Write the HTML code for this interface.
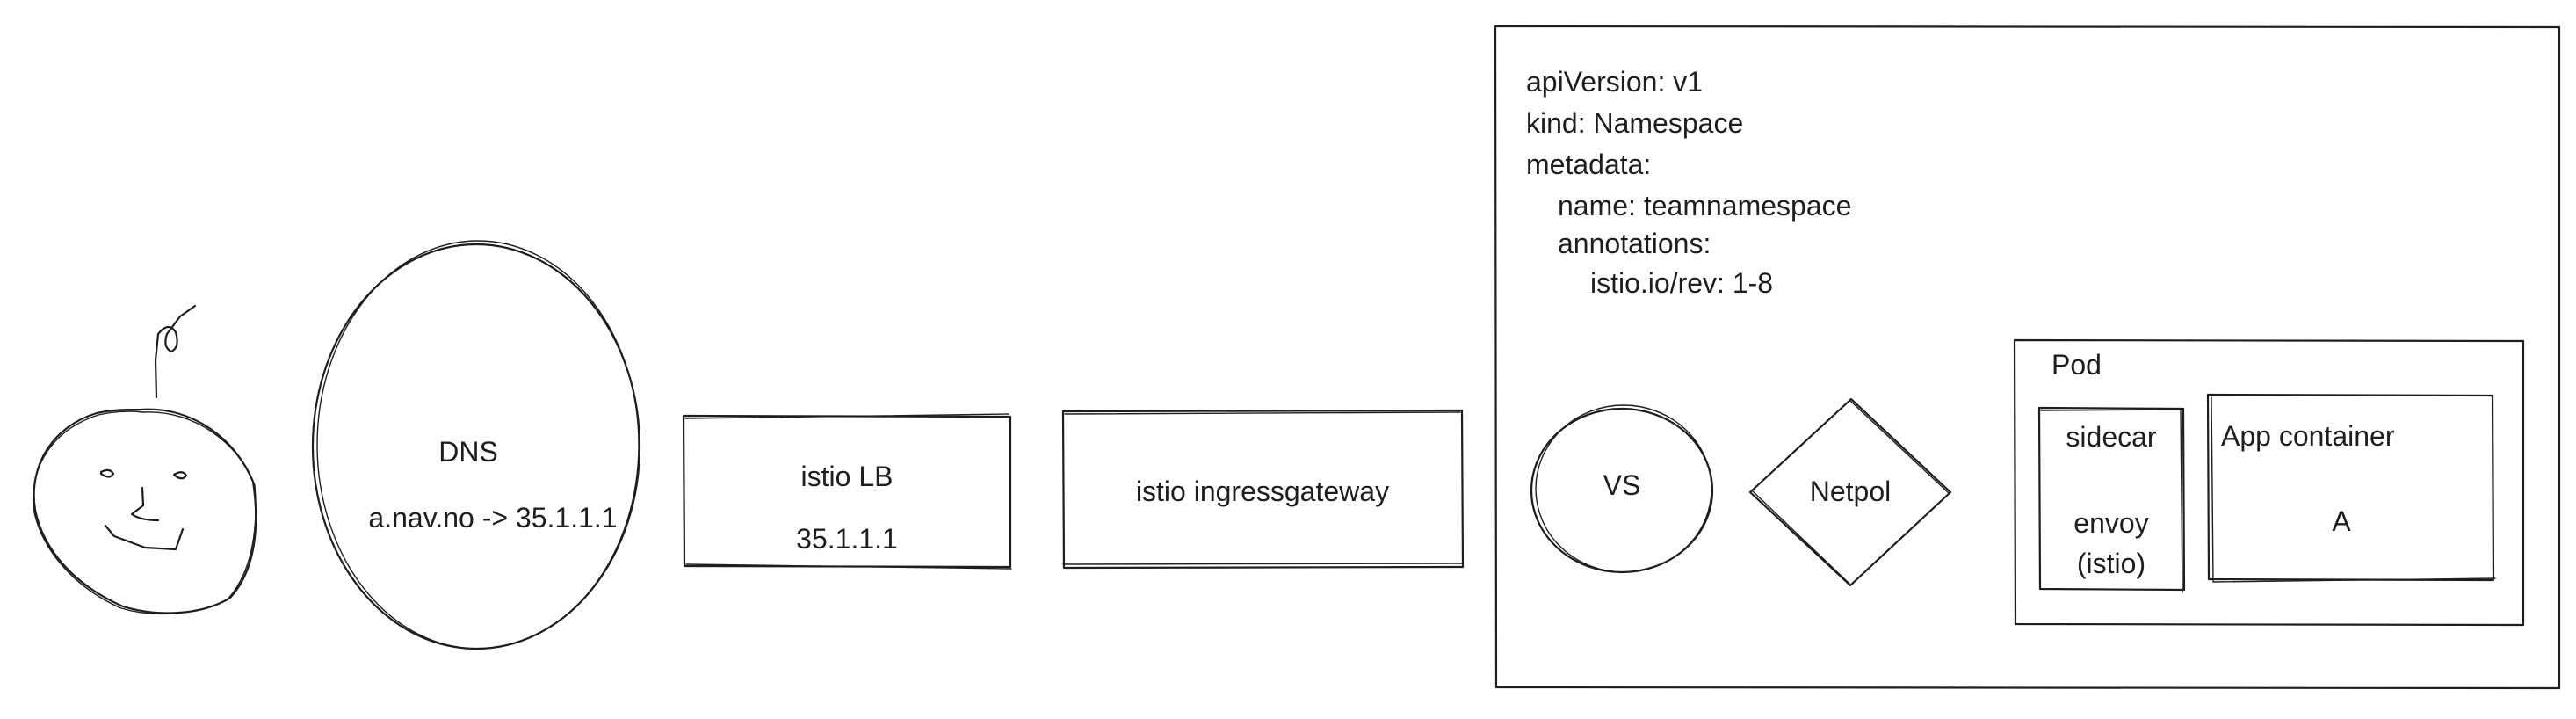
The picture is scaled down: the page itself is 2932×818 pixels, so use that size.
<!DOCTYPE html>
<html><head><meta charset="utf-8"><style>
html,body{margin:0;padding:0;background:#fff;}
svg{display:block;}
text{font-family:"Liberation Sans",sans-serif;fill:#1e1e1e;}
</style></head><body>
<svg width="2932" height="818" viewBox="0 0 2932 818" xmlns="http://www.w3.org/2000/svg">
<g fill="none" stroke="#1e1e1e" stroke-width="2.2" stroke-linecap="round" stroke-linejoin="round">
<!-- face -->
<path d="M160 466 C220 462 268 500 288 548 C296 600 290 650 262 680 C230 700 180 702 140 690 C90 668 50 630 40 580 C32 530 60 485 110 470 C128 466 145 466 160 466 Z"/>
<path d="M163 469 C222 466 272 505 290 552 C294 602 287 652 258 683 C226 698 178 704 138 692 C88 670 47 628 38 578 C34 528 62 488 112 472 C130 468 147 467 163 469 Z" stroke-width="1.4"/>
<path d="M178 452 L177 410 L180 380 Q192 365 200 378 Q205 395 195 400 Q185 395 190 380 L205 360 L222 348"/>
<path d="M115 537 q10 -5 14 2 q-4 7 -14 0z"/>
<path d="M198 540 q10 -6 14 1 q-5 7 -14 -1z"/>
<path d="M162 555 L163 575 L150 585 Q160 592 180 592"/>
<path d="M120 598 L130 610 L165 623 L200 625 L208 602"/>
<!-- DNS ellipse -->
<ellipse cx="542" cy="508" rx="186" ry="230"/>
<ellipse cx="544" cy="506" rx="183" ry="232" stroke-width="1.4"/>
<!-- istio LB -->
<path d="M778 473 L1150 474 L1150 645 L779 644 Z"/>
<path d="M780 476 L1148 471 M781 642 L1151 647" stroke-width="1.4"/>
<!-- ingressgateway -->
<path d="M1210 468 L1664 467 L1665 645 L1211 646 Z"/>
<path d="M1212 471 L1662 469 M1210 642 L1665 641" stroke-width="1.4"/>
<!-- namespace box -->
<path d="M1702 30 L2913 31 L2913 783 L1703 782 Z"/>
<!-- VS -->
<ellipse cx="1846" cy="558" rx="103" ry="93"/>
<ellipse cx="1848" cy="556" rx="100" ry="95" stroke-width="1.4"/>
<!-- Netpol -->
<path d="M2107 454 L2220 560 L2106 666 L1992 560 Z"/>
<path d="M2106 456 L2218 561 M1994 558 L2105 664" stroke-width="1.4"/>
<!-- Pod -->
<path d="M2293 387 L2872 388 L2872 711 L2294 710 Z"/>
<!-- sidecar box -->
<path d="M2321 464 L2485 465 L2486 671 L2322 670 Z"/>
<path d="M2323 467 L2482 466 L2484 674" stroke-width="1.4"/>
<!-- App container -->
<path d="M2513 449 L2837 450 L2838 660 L2514 659 Z"/>
<path d="M2517 452 L2519 662 L2840 658" stroke-width="1.4"/>
</g>
<g font-size="32">
<text x="533" y="525" text-anchor="middle">DNS</text>
<text x="561" y="600" text-anchor="middle">a.nav.no -&gt; 35.1.1.1</text>
<text x="964" y="553" text-anchor="middle">istio LB</text>
<text x="964" y="624" text-anchor="middle">35.1.1.1</text>
<text x="1437" y="570" text-anchor="middle">istio ingressgateway</text>
<text x="1846" y="563" text-anchor="middle">VS</text>
<text x="2106" y="570" text-anchor="middle">Netpol</text>
<text x="2335" y="426">Pod</text>
<text x="2403" y="508" text-anchor="middle">sidecar</text>
<text x="2403" y="606" text-anchor="middle">envoy</text>
<text x="2403" y="652" text-anchor="middle">(istio)</text>
<text x="2528" y="507">App container</text>
<text x="2665" y="604" text-anchor="middle">A</text>
</g>
<g font-size="32">
<text x="1737" y="104">apiVersion: v1</text>
<text x="1737" y="151">kind: Namespace</text>
<text x="1737" y="198">metadata:</text>
<text x="1773" y="245">name: teamnamespace</text>
<text x="1773" y="288">annotations:</text>
<text x="1810" y="333">istio.io/rev: 1-8</text>
</g>
</svg>
</body></html>
